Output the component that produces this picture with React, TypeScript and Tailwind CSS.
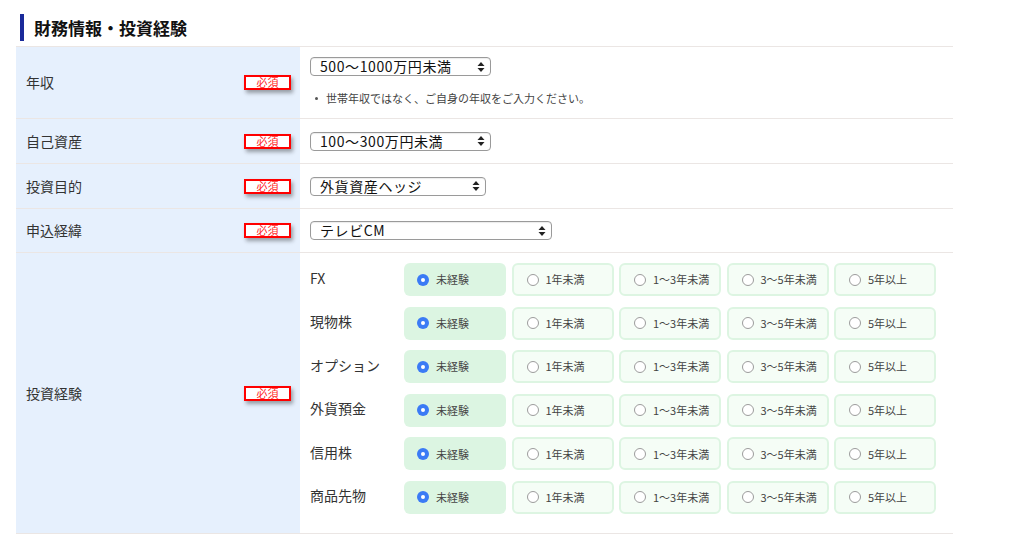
const FONT = "font-['Noto_Sans_CJK_JP','Noto_Sans',sans-serif]";

const Badge = () => (
  <span className="flex h-[15px] w-[47px] items-center justify-center border-2 border-[#ff0000] bg-white text-[11px] leading-none text-[#ff1f1f] shadow-[2px_3px_4px_rgba(0,0,0,0.35)]">
    必須
  </span>
);

const Arrows = () => (
  <svg width="8" height="12" viewBox="0 0 8 12" className="shrink-0">
    <path d="M4 1 L7.5 5 L0.5 5 Z" fill="#222" />
    <path d="M4 11 L7.5 7 L0.5 7 Z" fill="#222" />
  </svg>
);

const FakeSelect = ({ value, width }: { value: string; width: string }) => (
  <div
    className={`flex h-[19px] items-center justify-between rounded-[4px] border border-[#9a9a9a] bg-white pl-[9px] pr-[5px] shadow-[inset_0_1px_1px_rgba(0,0,0,0.08)] ${width}`}
  >
    <span className="text-[14px] leading-[17px] tracking-[0.6px] text-[#111]">{value}</span>
    <Arrows />
  </div>
);

const Row = ({ label, children, h }: { label: string; children: React.ReactNode; h: string }) => (
  <div className={`flex border-b border-[#ebe6e4] ${h}`}>
    <div className="flex w-[284px] shrink-0 items-center justify-between bg-[#e6f0fd] pl-[10px] pr-[9px]">
      <span className="text-[14px] text-[#333]">{label}</span>
      <Badge />
    </div>
    <div className="flex-1 pl-[10px]">{children}</div>
  </div>
);

const options = ["未経験", "1年未満", "1〜3年未満", "3〜5年未満", "5年以上"];
const kinds = ["FX", "現物株", "オプション", "外貨預金", "信用株", "商品先物"];

const RadioCell = ({ text, on }: { text: string; on: boolean }) => (
  <div
    className={`flex h-[33px] w-[102px] items-center gap-[7px] rounded-[6px] pl-[13px] ${
      on ? "bg-[#dcf5e2]" : "border-2 border-[#ddf5e2] bg-[#f5fdf6] pl-[11px]"
    }`}
  >
    {on ? (
      <span className="flex h-[12px] w-[12px] items-center justify-center rounded-full bg-[#3b7bf5]">
        <span className="h-[4px] w-[4px] rounded-full bg-white" />
      </span>
    ) : (
      <span className="h-[12px] w-[12px] rounded-full border border-[#9c9c9c] bg-white" />
    )}
    <span className="text-[11px] text-[#444]">{text}</span>
  </div>
);

export default function App() {
  return (
    <div className={`h-[556px] w-[1024px] bg-white ${FONT}`}>
      <div className="flex items-center gap-[10px] pl-[20px] pt-[14px]">
        <div className="h-[27px] w-[4px] bg-[#1a2a9a]" />
        <h2 className="text-[17px] font-bold text-[#111]">財務情報・投資経験</h2>
      </div>
      <div className="ml-[16px] mt-[5px] w-[937px] border-t border-[#ebe6e4]">
        <Row label="年収" h="h-[72px]">
          <div className="pt-[10px]">
            <FakeSelect value="500〜1000万円未満" width="w-[181px]" />
            <div className="mt-[14px] flex items-center gap-[8px] pl-[5px] text-[11px] text-[#444]">
              <span className="h-[3px] w-[3px] rounded-full bg-[#555]" />
              <span>世帯年収ではなく、ご自身の年収をご入力ください。</span>
            </div>
          </div>
        </Row>
        <Row label="自己資産" h="h-[45px]">
          <div className="flex h-full items-center">
            <FakeSelect value="100〜300万円未満" width="w-[181px]" />
          </div>
        </Row>
        <Row label="投資目的" h="h-[45px]">
          <div className="flex h-full items-center">
            <FakeSelect value="外貨資産ヘッジ" width="w-[176px]" />
          </div>
        </Row>
        <Row label="申込経緯" h="h-[44px]">
          <div className="flex h-full items-center">
            <FakeSelect value="テレビCM" width="w-[242px]" />
          </div>
        </Row>
        <Row label="投資経験" h="h-[281px]">
          <div className="flex flex-col gap-[10.6px] pt-[10px]">
            {kinds.map((k) => (
              <div key={k} className="flex items-center">
                <span className="w-[94px] pb-[3px] text-[14px] text-[#333]">{k}</span>
                <div className="flex gap-[5.5px]">
                  {options.map((o, i) => (
                    <RadioCell key={o} text={o} on={i === 0} />
                  ))}
                </div>
              </div>
            ))}
          </div>
        </Row>
      </div>
    </div>
  );
}
